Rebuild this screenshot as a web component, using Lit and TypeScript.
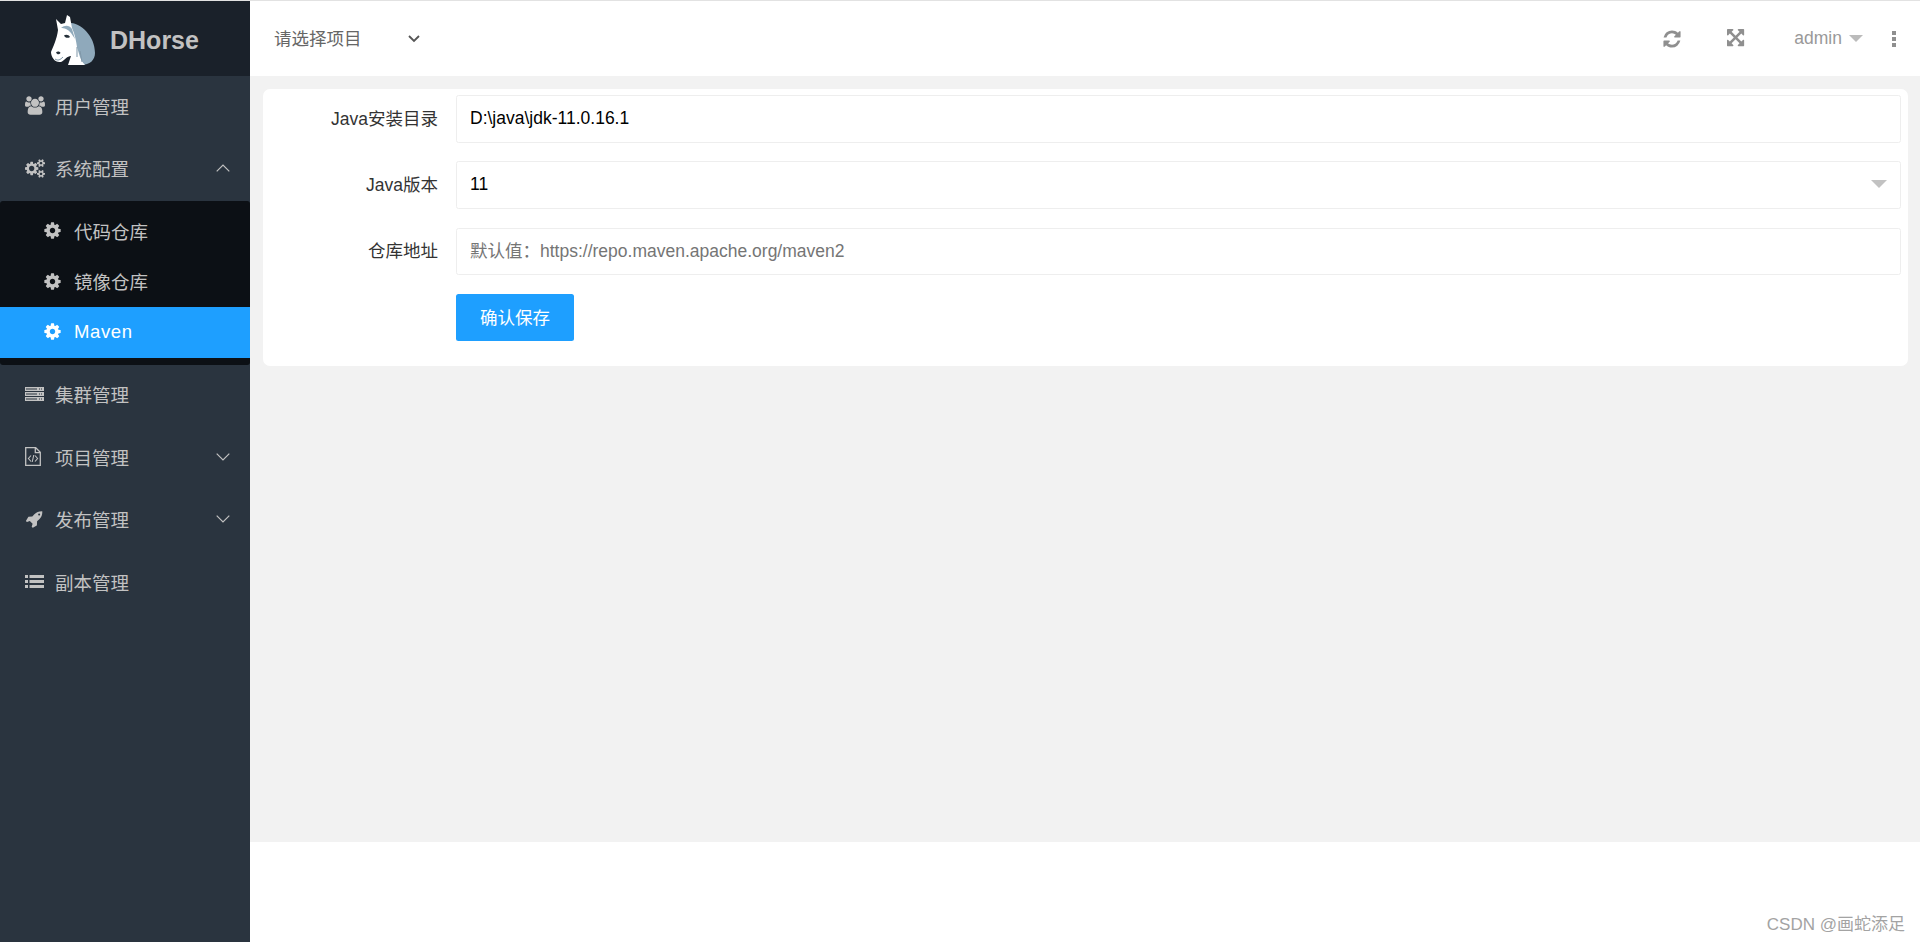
import { LitElement, html, css, svg } from "lit";
import { customElement } from "lit/decorators.js";

const COG = "M1152 896q0-106-75-181t-181-75-181 75-75 181 75 181 181 75 181-75 75-181zm512-109v222q0 12-8 23t-20 13l-185 28q-19 54-39 91 35 50 107 138 10 12 10 25t-9 23q-27 37-99 108t-94 71q-12 0-26-9l-138-108q-44 23-91 38-16 136-29 186-7 28-36 28h-222q-14 0-24.5-8.5t-11.5-21.5l-28-184q-49-16-90-37l-141 107q-10 9-25 9-14 0-25-11-126-114-165-168-7-10-7-23 0-12 8-23 15-21 51-66.5t54-70.5q-27-50-41-99l-183-27q-13-2-21-12.5t-8-23.5v-222q0-12 8-23t19-13l186-28q14-46 39-92-40-57-107-138-10-12-10-24 0-10 9-23 26-36 98.5-107.5t94.5-71.5q13 0 26 10l138 107q44-23 91-38 16-136 29-186 7-28 36-28h222q14 0 24.5 8.5t11.5 21.5l28 184q49 16 90 37l142-107q9-9 24-9 13 0 25 10 129 119 165 170 7 8 7 22 0 12-8 23-15 21-51 66.5t-54 70.5q26 50 41 98l183 28q13 2 21 12.5t8 23.5z";
const REFRESH = "M1639 1056q0 5-1 7-64 268-268 434.5t-478 166.5q-146 0-282.5-55t-243.5-157l-129 129q-19 19-45 19t-45-19-19-45v-448q0-26 19-45t45-19h448q26 0 45 19t19 45-19 45l-137 137q71 66 161 102t187 36q134 0 250-65t186-179q11-17 53-117 8-23 30-23h192q13 0 22.5 9.5t9.5 22.5zm25-800v448q0 26-19 45t-45 19h-448q-26 0-45-19t-19-45 19-45l138-138q-148-137-349-137-134 0-250 65t-186 179q-11 17-53 117-8 23-30 23h-199q-13 0-22.5-9.5t-9.5-22.5v-7q65-268 270-434.5t480-166.5q146 0 284 55.5t245 156.5l130-129q19-19 45-19t45 19 19 45z";
const ARROWS = "M1283 413l-355 355 355 355 144-144q29-31 70-14 39 17 39 59v448q0 26-19 45t-45 19h-448q-42 0-59-40-17-39 14-69l144-144-355-355-355 355 144 144q31 30 14 69-17 40-59 40h-448q-26 0-45-19t-19-45v-448q0-42 40-59 39-17 69 14l144 144 355-355-355-355-144 144q-19 19-45 19-9 0-24-5-40-17-40-59v-448q0-26 19-45t45-19h448q42 0 59 40 17 39-14 69l-144 144 355 355 355-355-144-144q-31-30-14-69 17-40 59-40h448q26 0 45 19t19 45v448q0 42-39 59-13 5-25 5-26 0-45-19z";
const ROCKET = "M1504 448q0-40-28-68t-68-28-68 28-28 68 28 68 68 28 68-28 28-68zm224-288q0 249-75.5 430.5t-253.5 360.5q-81 80-195 176l-20 379q-2 16-16 26l-384 224q-7 4-16 4-12 0-23-9l-64-64q-13-14-8-32l85-276-281-281-276 85q-3 1-9 1-14 0-23-9l-64-64q-17-19-5-39l224-384q10-14 26-16l379-20q96-114 176-195 188-187 358-258t431-71q14 0 24 9.5t10 22.5z";
const USERS = "M593 896q-162 5-265 128h-134q-82 0-138-40.5t-56-118.5q0-353 124-353 6 0 43.5 21t97.5 42.5 119 21.5q67 0 133-23-5 37-5 66 0 139 81 256zm1071 637q0 120-73 189.5t-194 69.5h-874q-121 0-194-69.5t-73-189.5q0-53 3.5-103.5t14-109 26.5-108.5 43-97.5 62-81 85.5-53.5 111.5-20q10 0 43 21.5t73 48 107 48 135 21.5 135-21.5 107-48 73-48 43-21.5q61 0 111.5 20t85.5 53.5 62 81 43 97.5 26.5 108.5 14 109 3.5 103.5zm-1024-1277q0 106-75 181t-181 75-181-75-75-181 75-181 181-75 181 75 75 181zm704 384q0 159-112.5 271.5t-271.5 112.5-271.5-112.5-112.5-271.5 112.5-271.5 271.5-112.5 271.5 112.5 112.5 271.5zm576 225q0 78-56 118.5t-138 40.5h-134q-103-123-265-128 81-117 81-256 0-29-5-66 66 23 133 23 59 0 119-21.5t97.5-42.5 43.5-21q124 0 124 353zm-128-609q0 106-75 181t-181 75-181-75-75-181 75-181 181-75 181 75 75 181z";
const COGS = "M896 896q0-106-75-181t-181-75-181 75-75 181 75 181 181 75 181-75 75-181zm768 512q0-52-38-90t-90-38-90 38-38 90q0 53 37.5 90.5t90.5 37.5 90.5-37.5 37.5-90.5zm0-1024q0-52-38-90t-90-38-90 38-38 90q0 53 37.5 90.5t90.5 37.5 90.5-37.5 37.5-90.5zm-384 421v185q0 10-7 19.5t-16 10.5l-155 24q-11 35-32 76 34 48 90 115 7 11 7 20 0 12-7 19-23 30-82.5 89.5t-78.5 59.5q-11 0-21-7l-115-90q-37 19-77 31-11 108-23 155-7 24-30 24h-186q-11 0-20-7.5t-10-17.5l-23-153q-34-10-75-31l-118 89q-7 7-20 7-11 0-21-8-144-133-144-160 0-9 7-19 10-14 41-53t47-61q-23-44-35-82l-152-24q-10-1-17-9.5t-7-19.5v-185q0-10 7-19.5t16-10.5l155-24q11-35 32-76-34-48-90-115-7-11-7-20 0-12 7-20 22-30 82-89t79-59q11 0 21 7l115 90q34-18 77-32 11-108 23-154 7-24 30-24h186q11 0 20 7.5t10 17.5l23 153q34 10 75 31l118-89q8-7 20-7 11 0 21 8 144 133 144 160 0 8-7 19-12 16-42 54t-45 60q23 48 34 82l152 23q10 2 17 10.5t7 19.5zm640 533v140q0 16-149 31-12 27-30 52 51 113 51 138 0 4-4 7-122 71-124 71-8 0-46-47t-52-68q-20 2-30 2t-30-2q-14 21-52 68t-46 47q-2 0-124-71-4-3-4-7 0-25 51-138-18-25-30-52-149-15-149-31v-140q0-16 149-31 13-29 30-52-51-113-51-138 0-4 4-7 4-2 35-20t59-34 30-16q8 0 46 46.5t52 67.5q20-2 30-2t30 2q51-71 92-112l6-2q4 0 124 70 4 3 4 7 0 25-51 138 17 23 30 52 149 15 149 31zm0-1024v140q0 16-149 31-12 27-30 52 51 113 51 138 0 4-4 7-122 71-124 71-8 0-46-47t-52-68q-20 2-30 2t-30-2q-14 21-52 68t-46 47q-2 0-124-71-4-3-4-7 0-25 51-138-18-25-30-52-149-15-149-31v-140q0-16 149-31 13-29 30-52-51-113-51-138 0-4 4-7 4-2 35-20t59-34 30-16q8 0 46 46.5t52 67.5q20-2 30-2t30 2q51-71 92-112l6-2q4 0 124 70 4 3 4 7 0 25-51 138 17 23 30 52 149 15 149 31z";

const fa = (d: string, w: number, size: number, vw = 1792) =>
  html`<svg class="fa" width=${w} height=${size} viewBox="0 0 ${vw} 1792" fill="currentColor"><path d=${d}></path></svg>`;

const serverIcon = html`<svg class="fa" width="19" height="16" viewBox="0 0 19 16" fill="currentColor">
  <path fill-rule="evenodd" d="M0 1h19v4H0zM1 2.5v1h11v-1zM14 2.5v1h1v-1zM16 2.5v1h1v-1z"></path>
  <path fill-rule="evenodd" d="M0 6h19v4H0zM1 7.5v1h11v-1zM14 7.5v1h1v-1zM16 7.5v1h1v-1z"></path>
  <path fill-rule="evenodd" d="M0 11h19v4H0zM1 12.5v1h11v-1zM14 12.5v1h1v-1zM16 12.5v1h1v-1z"></path>
</svg>`;

const fileCode = html`<svg class="fa" width="16" height="19" viewBox="0 0 16 19" fill="none" stroke="currentColor" stroke-width="1.3">
  <path d="M.7.7h10l4.6 4.6v13H.7zM10.3.7v5h5"></path>
  <path d="M6 8.5 3.4 11.5 6 14.5M10 8.5l2.6 3-2.6 3M8.8 8 7.2 15" stroke-width="1.1"></path>
</svg>`;

const listIcon = html`<svg class="fa" width="19" height="16" viewBox="0 0 19 16" fill="currentColor">
  <path d="M0 1h3v3H0zM4.500 1H19v3H4.500zM0 6h3v3H0zM4.500 6H19v3H4.500zM0 11h3v3H0zM4.500 11H19v3H4.500z"></path>
</svg>`;

const chevron = (up: boolean) => html`<svg class="chev" width="14" height="8" viewBox="0 0 14 8" fill="none" stroke="currentColor" stroke-width="1.2">
  <path d=${up ? "M.7 7.300 7 1l6.300 6.300" : "M.7.700 7 7l6.300-6.300"}></path>
</svg>`;

const horse = svg`
  <path fill="#8fa9bb" d="M15 8C28 6 44 20 44 38C44 45 39 50 30 50L23 48L24 30L14 18Z"></path>
  <path fill="#fff" d="M5 4L10 9L14 8L16 0L19 2L21 13C24 19 25 26 26 32C28 38 29 45 34 50L17 50L20 41C16 41 14 45 10 47C4 48 0 42 0 37C2 32 6 24 7 15Z"></path>
  <path fill="#8fa9bb" d="M10 13C14 10 18 10 21 14L24 24L20 18C17 14 13 13 10 13Z"></path>
  <path fill="#25303a" d="M13 20.500C15 19 18 20 19 22C17 23.500 14 23 13 20.500ZM5 37.500C6 36 9 36 9.500 38C8 40 6 39.500 5 37.500Z"></path>
  <path fill="none" stroke="#7f97a8" stroke-width="1" d="M26 32L26 42M29 36L31 47M4 44C7 46 9 45 12 42"></path>
`;

@customElement("app-root")
export class AppRoot extends LitElement {
  static styles = css`
    :host {
      display: block;
      height: 100vh;
      overflow: hidden;
      font-family: "Liberation Sans", "Noto Sans CJK SC", sans-serif;
      font-size: 17.5px;
    }
    .page { display: flex; flex-direction: column; height: 100%; background: #fff; }
    .topline { height: 1px; flex: none; background: #e2e2e2; }
    .body { display: flex; flex: 1; min-height: 0; }

    .side { width: 250px; flex: none; background: #2a343f; color: #c2c2c2; font-size: 18.5px; }
    .logo { height: 75px; background: #1a212a; display: flex; align-items: center; gap: 15px; padding: 3px 0 0 51px; box-sizing: border-box; }
    .logo-name { font-size: 25px; font-weight: 700; color: #c2c2c2; }
    .fa { display: block; flex: none; }
    .item { height: 62.5px; display: flex; align-items: center; padding: 0 0 3px 25px; box-sizing: border-box; }
    .ic { width: 30px; flex: none; display: flex; }
    .label { flex: 1; }
    .chev { margin-right: 20px; flex: none; }
    .sub { background: #0c1015; border-radius: 3px; padding: 5px 0 7px; }
    .sub-item { height: 50.500px; display: flex; align-items: center; padding: 0 0 1px 42.500px; box-sizing: border-box; }
    .sub-item .ic { width: 31.500px; }
    .sub-item.on { background: #1e9fff; color: #fff; }
    .maven { letter-spacing: 0.6px; }

    .main { flex: 1; min-width: 0; display: flex; flex-direction: column; }
    .bar { height: 75px; flex: none; display: flex; align-items: center; padding-left: 24px; color: #666; }
    .picker { width: 134px; flex: none; padding-bottom: 2px; }
    .pick-chev { color: #555; }
    .tools { margin-left: auto; display: flex; align-items: center; color: #8f8f8f; }
    .refresh { margin-right: 44.500px; }
    .expand { margin-right: 47.500px; }
    .user { color: #999; }
    .caret { width: 0; height: 0; border: 7.500px solid transparent; border-top-color: #bbb; border-bottom-width: 0; margin: 0 0 0 7px; }
    .kebab { display: flex; flex-direction: column; gap: 2px; margin: 0 24px 0 29px; }
    .kebab i { width: 4px; height: 4px; background: #8f8f8f; display: block; }

    .content { flex: 1; background: #f2f2f2; padding: 13px 12px 0 13px; min-height: 0; }
    .card { background: #fff; border-radius: 7px; padding: 6px 7px 25px 0; display: grid; grid-template-columns: 193px 1fr; row-gap: 18.750px; }
    .lab { display: flex; align-items: center; justify-content: flex-end; padding: 0 18px 3px 0; color: #333; }
    .field { height: 47.500px; box-sizing: border-box; border: 1.250px solid #eee; border-radius: 2.500px; display: flex; align-items: center; justify-content: space-between; padding: 0 13px; font: inherit; color: #000; width: 100%; outline: none; background: #fff; }
    .field::placeholder { color: #757575; opacity: 1; }
    .sel { padding-bottom: 2px; }
    .field-caret { width: 0; height: 0; border: 8px solid transparent; border-top-color: #c2c2c2; border-bottom-width: 0; }
    .actions { grid-column: 2; }
    .btn { height: 47.500px; width: 118px; border: 0; border-radius: 2.500px; background: #1e9fff; color: #fff; font: inherit; display: block; padding: 0 0 3px; }

    .foot { height: 100px; box-sizing: border-box; flex: none; display: flex; align-items: flex-end; justify-content: flex-end; padding: 0 15px 7px 0; color: #a3a3a3; font-size: 17px; }
  `;

  private top(icon: unknown, text: string, chev?: "up" | "down") {
    return html`<div class="item">
      <span class="ic">${icon}</span><span class="label">${text}</span>
      ${chev ? chevron(chev === "up") : ""}
    </div>`;
  }

  private sub(text: string, on = false) {
    return html`<div class="sub-item ${on ? "on" : ""}">
      <span class="ic">${fa(COG, 19, 19)}</span><span class=${on ? "maven" : ""}>${text}</span>
    </div>`;
  }

  render() {
    return html`<div class="page">
      <div class="topline"></div>
      <div class="body">
        <aside class="side">
          <div class="logo">
            <svg width="44" height="50" viewBox="0 0 44 50" class="fa">${horse}</svg>
            <span class="logo-name">DHorse</span>
          </div>
          ${this.top(fa(USERS, 20, 19, 1920), "用户管理")}
          ${this.top(fa(COGS, 20, 19, 1920), "系统配置", "up")}
          <div class="sub">
            ${this.sub("代码仓库")}
            ${this.sub("镜像仓库")}
            ${this.sub("Maven", true)}
          </div>
          ${this.top(serverIcon, "集群管理")}
          ${this.top(fileCode, "项目管理", "down")}
          ${this.top(fa(ROCKET, 18, 18), "发布管理", "down")}
          ${this.top(listIcon, "副本管理")}
        </aside>
        <div class="main">
          <header class="bar">
            <span class="picker">请选择项目</span>
            <svg class="pick-chev" width="12" height="8" viewBox="0 0 12 8" fill="none" stroke="currentColor" stroke-width="1.800"><path d="M1 1l5 5 5-5"></path></svg>
            <div class="tools">
              <span class="refresh">${fa(REFRESH, 20, 20)}</span>
              <span class="expand">${fa(ARROWS, 20, 20)}</span>
              <span class="user">admin</span><span class="caret"></span>
              <span class="kebab"><i></i><i></i><i></i></span>
            </div>
          </header>
          <div class="content">
            <div class="card">
              <div class="lab">Java安装目录</div>
              <input class="field" .value=${"D:\\java\\jdk-11.0.16.1"} />
              <div class="lab">Java版本</div>
              <div class="field sel"><span>11</span><span class="field-caret"></span></div>
              <div class="lab">仓库地址</div>
              <input class="field" placeholder="默认值：https://repo.maven.apache.org/maven2" />
              <div class="actions"><button class="btn">确认保存</button></div>
            </div>
          </div>
          <footer class="foot">CSDN @画蛇添足</footer>
        </div>
      </div>
    </div>`;
  }
}
